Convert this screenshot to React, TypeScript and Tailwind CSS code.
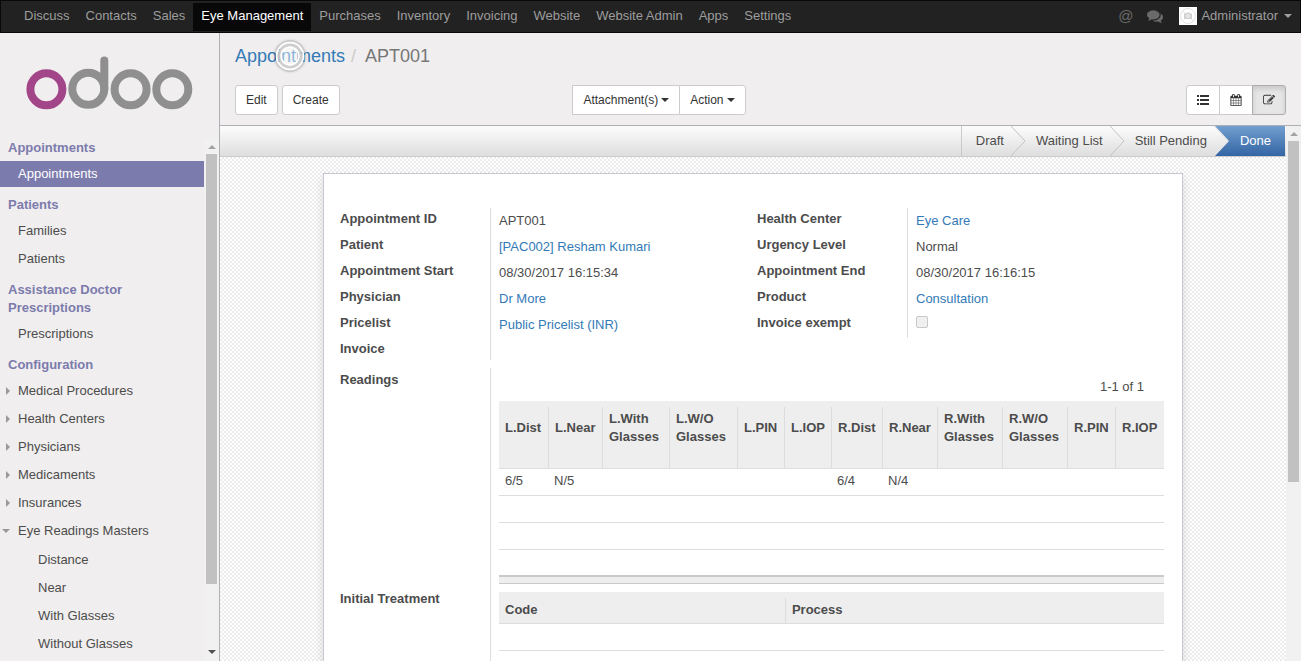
import React from "react";

const CALENDAR =
  "M192 1664h288v-288h-288v288zm352 0h320v-288h-320v288zm-352-352h288v-320h-288v320zm352 0h320v-320h-320v320zm-352-384h288v-288h-288v288zm736 736h320v-288h-320v288zm-384-736h320v-288h-320v288zm768 736h288v-288h-288v288zm-384-352h320v-320h-320v320zm-352-864v-288q0-13-9.5-22.5t-22.5-9.5h-64q-13 0-22.5 9.5t-9.5 22.5v288q0 13 9.5 22.5t22.5 9.5h64q13 0 22.5-9.5t9.5-22.5zm736 864h288v-320h-288v320zm-384-384h320v-288h-320v288zm384 0h288v-288h-288v288zm32-480v-288q0-13-9.5-22.5t-22.5-9.5h-64q-13 0-22.5 9.5t-9.5 22.5v288q0 13 9.5 22.5t22.5 9.5h64q13 0 22.5-9.5t9.5-22.5zm384-64v1280q0 52-38 90t-90 38h-1408q-52 0-90-38t-38-90v-1280q0-52 38-90t90-38h128v-96q0-66 47-113t113-47h64q66 0 113 47t47 113v96h384v-96q0-66 47-113t113-47h64q66 0 113 47t47 113v96h128q52 0 90 38t38 90z";
const PENCIL =
  "M888 1184l116-116-152-152-116 116v56h96v96h56zm440-720q-16-16-33 1l-350 350q-17 17-1 33t33-1l350-350q17-17 1-33zm80 594v190q0 119-84.5 203.5t-203.5 84.5h-832q-119 0-203.5-84.5t-84.5-203.5v-832q0-119 84.5-203.5t203.5-84.5h832q63 0 117 25 15 7 18 23 3 17-9 29l-49 49q-14 14-32 8-23-6-45-6h-832q-66 0-113 47t-47 113v832q0 66 47 113t113 47h832q66 0 113-47t47-113v-126q0-13 9-22l64-64q15-15 35-7t20 29zm-96-738l288 288-672 672h-288v-288zm444 132l-92 92-288-288 92-92q28-28 68-28t68 28l152 152q28 28 28 68t-28 68z";
const COMMENTS =
  "M1408 768q0 139-94 257t-256.5 186.5-353.5 68.5q-86 0-176-16-124 88-278 128-36 9-86 16h-3q-11 0-20.5-8t-11.5-21q-1-3-1-6.5t.5-6.5 2-6l2.5-5 3.5-5.5 4-5 4.5-5 4-4.5q5-6 23-25t26-29.5 22.5-29 25-38.5 20.5-44q-124-72-195-177t-71-224q0-139 94-257t256.5-186.5 353.5-68.5 353.5 68.5 256.5 186.5 94 257zm384 256q0 120-71 224.5t-195 176.5q10 24 20.5 44t25 38.5 22.5 29 26 29.5 23 25q1 1 4 4.5t4.5 5 4 5 3.5 5.5l2.5 5 2 6 .5 6.5-1 6.5q-3 14-13 22t-22 7q-50-7-86-16-154-40-278-128-90 16-176 16-271 0-472-132 58 4 88 4 161 0 309-45t264-129q125-92 192-212t67-254q0-77-23-152 129 71 204 178t75 230z";

function Glyph({ d, className }: { d: string; className: string }) {
  return (
    <svg viewBox="0 0 1792 1792" className={className} fill="currentColor" aria-hidden="true">
      <path d={d} />
    </svg>
  );
}

function CaretDown({ className = "" }: { className?: string }) {
  return (
    <svg viewBox="0 0 8 4" className={`h-1 w-2 shrink-0 ${className}`} fill="currentColor" aria-hidden="true">
      <path d="M0 0h8L4 4z" />
    </svg>
  );
}

function Navbar() {
  const apps = [
    "Discuss", "Contacts", "Sales", "Eye Management", "Purchases", "Inventory",
    "Invoicing", "Website", "Website Admin", "Apps", "Settings",
  ];
  return (
    <header className="flex h-[33px] shrink-0 items-center justify-between border border-[#080808] bg-[#222] pr-2 pl-[15px] text-[#9d9d9d]">
      <nav className="flex">
        {apps.map((app) => (
          <a
            key={app}
            href="#"
            className={
              app === "Eye Management"
                ? "bg-[#080808] px-2 pt-1 pb-[6px] leading-[18px] whitespace-nowrap text-white"
                : "px-2 pt-1 pb-[6px] leading-[18px] whitespace-nowrap"
            }
          >
            {app}
          </a>
        ))}
      </nav>
      <div className="flex items-center pb-[2px]">
        <button type="button" aria-label="Mentions" className="mr-[14px] text-[15px] leading-[18px] text-[#6a6a6a]">
          @
        </button>
        <button type="button" aria-label="Conversations" className="mr-4 text-[#6a6a6a]">
          <Glyph d={COMMENTS} className="size-4" />
        </button>
        <button type="button" className="flex items-center">
          <svg viewBox="0 0 18 18" className="mr-1 size-[18px]" aria-hidden="true">
            <rect width="18" height="18" fill="#fff" />
            <circle cx="9" cy="9" r="7.5" fill="none" stroke="#e2e2e2" />
            <path d="M3.5 4l11 10" stroke="#e2e2e2" />
            <path d="M5 6.5h2l1-1h2.5l1 1H13v5.5H5z" fill="#d0d0d0" />
            <circle cx="9" cy="9" r="1.8" fill="#fff" />
            <circle cx="9" cy="9" r="1" fill="#d0d0d0" />
          </svg>
          Administrator
          <CaretDown className="ml-[6px]" />
        </button>
      </div>
    </header>
  );
}

function Logo() {
  return (
    <svg viewBox="0 0 219 106" className="h-[106px] w-full shrink-0" fill="none" strokeWidth="8" role="img" aria-label="odoo">
      <circle cx="46.4" cy="56.3" r="16" stroke="#a24689" />
      <g stroke="#8f8f8f">
        <circle cx="88.3" cy="55.8" r="16" />
        <path d="M104.3 56V27.5" strokeLinecap="round" />
        <circle cx="130.6" cy="56.3" r="16" />
        <circle cx="172.3" cy="56.3" r="16" />
      </g>
    </svg>
  );
}

type Item = { label: string; active?: boolean; state?: "open" | "closed"; children?: string[] };

const SECTIONS: { title: string; items: Item[] }[] = [
  { title: "Appointments", items: [{ label: "Appointments", active: true }] },
  { title: "Patients", items: [{ label: "Families" }, { label: "Patients" }] },
  { title: "Assistance Doctor Prescriptions", items: [{ label: "Prescriptions" }] },
  {
    title: "Configuration",
    items: [
      { label: "Medical Procedures", state: "closed" },
      { label: "Health Centers", state: "closed" },
      { label: "Physicians", state: "closed" },
      { label: "Medicaments", state: "closed" },
      { label: "Insurances", state: "closed" },
      {
        label: "Eye Readings Masters",
        state: "open",
        children: ["Distance", "Near", "With Glasses", "Without Glasses"],
      },
    ],
  },
];

function ItemLink({ item }: { item: Item }) {
  return (
    <a
      href="#"
      className={
        item.active
          ? "mb-[2px] flex h-[26px] items-center bg-[#7c7bad] text-white"
          : "mb-[2px] flex h-[26px] items-center"
      }
    >
      <span className="flex w-[18px] shrink-0 items-center text-[#999]">
        {item.state === "closed" && (
          <svg viewBox="0 0 4 8" className="ml-[6px] h-2 w-1" fill="currentColor" aria-hidden="true">
            <path d="M0 0l4 4-4 4z" />
          </svg>
        )}
        {item.state === "open" && <CaretDown className="ml-[2px]" />}
      </span>
      {item.label}
    </a>
  );
}

function Sidebar() {
  return (
    <aside className="flex w-[220px] shrink-0 flex-col border-r border-[#afafb6] bg-[#f0eeee]">
      <Logo />
      <div className="flex min-h-0 flex-1">
        <nav className="min-w-0 flex-1 overflow-hidden text-[#4c4c4c]">
          {SECTIONS.map((section) => (
            <section key={section.title} className="mb-[9px]">
              <h2 className="mb-1 px-2 leading-[18px] font-bold text-[#7c7bad]">{section.title}</h2>
              {section.items.map((item) => (
                <React.Fragment key={item.label}>
                  <ItemLink item={item} />
                  {item.children && (
                    <div className="pt-px">
                      {item.children.map((child) => (
                        <a key={child} href="#" className="mb-[2px] flex h-[26px] items-center pl-[38px]">
                          {child}
                        </a>
                      ))}
                    </div>
                  )}
                </React.Fragment>
              ))}
            </section>
          ))}
        </nav>
        <Scrollbar thumb="h-[87.4%]" downArrow />
      </div>
    </aside>
  );
}

function Scrollbar({ thumb, downArrow = false }: { thumb: string; downArrow?: boolean }) {
  return (
    <div className="flex w-[15px] shrink-0 flex-col bg-[#f1f1f1]" aria-hidden="true">
      <div className="flex h-[15px] items-center justify-center text-[#a3a3a3]">
        <CaretDown className="rotate-180" />
      </div>
      <div className="min-h-0 flex-1 px-[2px]">
        <div className={`bg-[#c1c1c1] ${thumb}`} />
      </div>
      <div className="flex h-[15px] justify-center pt-1 text-[#505050]">{downArrow && <CaretDown />}</div>
    </div>
  );
}

function ControlPanel() {
  const btn = "flex h-[30px] items-center border border-[#ccc] bg-white px-[10px] text-[12px] text-[#333]";
  return (
    <div className="flex h-[93px] shrink-0 flex-col justify-between border-b border-[#afafb6] bg-[#f0eeee] px-[15px] pt-[10px] pb-[10px]">
      <div className="relative flex text-[18px] leading-[26px]">
        <a href="#" className="text-[#337ab7]">Appointments</a>
        <span className="px-[6px] text-[#ccc]">/</span>
        <span className="pl-[3px] text-[#777]">APT001</span>
        <svg viewBox="0 0 36 36" className="absolute -top-[5px] left-[37px] size-9" fill="none" aria-hidden="true">
          <circle cx="18" cy="18" r="16" stroke="#000" strokeOpacity="0.04" strokeWidth="3" />
          <circle cx="18" cy="18" r="15" stroke="#000" strokeOpacity="0.12" strokeWidth="2" />
          <circle cx="18" cy="18" r="11" fill="#fff" fillOpacity="0.45" stroke="#c8c8c8" strokeWidth="3" strokeOpacity="0.85" />
          <circle cx="18" cy="18" r="13.5" stroke="#fff" strokeWidth="1.5" />
          <circle cx="18" cy="18" r="9" stroke="#fff" strokeWidth="1.5" />
        </svg>
      </div>
      <div className="flex">
        <div className="flex w-1/2 justify-between pr-[15px]">
          <div className="flex gap-1">
            <button type="button" className={`${btn} rounded-[3px]`}>Edit</button>
            <button type="button" className={`${btn} rounded-[3px]`}>Create</button>
          </div>
          <div className="flex">
            <button type="button" className={`${btn} gap-[3px]`}>
              Attachment(s) <CaretDown />
            </button>
            <button type="button" className={`${btn} -ml-px gap-[3px] rounded-r-[3px]`}>
              Action <CaretDown />
            </button>
          </div>
        </div>
        <div className="flex w-1/2 justify-end">
          <button type="button" aria-label="List" className={`${btn} rounded-l-[3px]`}>
            <svg viewBox="0 0 12 12" className="size-3" fill="currentColor" aria-hidden="true">
              <path d="M0 1h2v2H0zM0 5h2v2H0zM0 9h2v2H0zM3 1h9v2H3zM3 5h9v2H3zM3 9h9v2H3z" />
            </svg>
          </button>
          <button type="button" aria-label="Calendar" className={`${btn} -ml-px`}>
            <Glyph d={CALENDAR} className="size-3" />
          </button>
          <button
            type="button"
            aria-label="Form"
            className="-ml-px flex h-[30px] items-center rounded-r-[3px] border border-[#adadad] bg-[#e6e6e6] px-[10px] text-[#333] shadow-[inset_0_3px_5px_rgba(0,0,0,0.125)]"
          >
            <Glyph d={PENCIL} className="size-3" />
          </button>
        </div>
      </div>
    </div>
  );
}

function Chevron({ last = false }: { last?: boolean }) {
  return (
    <svg viewBox="0 0 15 30" className="h-full w-[15px]" preserveAspectRatio="none" aria-hidden="true">
      {last && (
        <>
          <defs>
            <linearGradient id="stage" x1="0" y1="0" x2="0" y2="30" gradientUnits="userSpaceOnUse">
              <stop offset="0" stopColor="#729fcf" />
              <stop offset="1" stopColor="#3465a4" />
            </linearGradient>
          </defs>
          <path d="M1 0H15V30H1L15 15z" fill="url(#stage)" />
        </>
      )}
      <path d="M0 0L14 15L0 30" fill="none" stroke={last ? "#e4e4e4" : "#c4c4c4"} />
    </svg>
  );
}

function StatusBar() {
  return (
    <div className="flex h-[31px] shrink-0 justify-end border-b border-[#cacaca] bg-linear-to-b from-[#fcfcfc] to-[#dedede] pr-px text-[#4c4c4c]">
      <ol className="flex h-[30px] border-l border-[#cacaca] leading-[30px] whitespace-nowrap">
        <li className="flex gap-[7px] pl-[14px]">
          Draft <Chevron />
        </li>
        <li className="flex gap-[7px] pl-[10px]">
          Waiting List <Chevron />
        </li>
        <li className="flex gap-[7px] pl-[10px]">
          Still Pending <Chevron last />
        </li>
        <li className="bg-linear-to-b from-[#729fcf] to-[#3465a4] pr-[14px] pl-[11px] text-white">Done</li>
      </ol>
    </div>
  );
}

type Field = { label: string; value?: string; link?: boolean; checkbox?: boolean };

const LEFT: Field[] = [
  { label: "Appointment ID", value: "APT001" },
  { label: "Patient", value: "[PAC002] Resham Kumari", link: true },
  { label: "Appointment Start", value: "08/30/2017 16:15:34" },
  { label: "Physician", value: "Dr More", link: true },
  { label: "Pricelist", value: "Public Pricelist (INR)", link: true },
  { label: "Invoice" },
];
const RIGHT: Field[] = [
  { label: "Health Center", value: "Eye Care", link: true },
  { label: "Urgency Level", value: "Normal" },
  { label: "Appointment End", value: "08/30/2017 16:16:15" },
  { label: "Product", value: "Consultation", link: true },
  { label: "Invoice exempt", checkbox: true },
];

function Group({ fields }: { fields: Field[] }) {
  return (
    <dl>
      {fields.map((f) => (
        <div key={f.label} className="flex h-[26px] last:h-[22px] has-[input]:last:h-[26px]">
          <dt className="w-[150px] shrink-0 pt-[2px] leading-[18px] font-bold">
            {f.checkbox ? <label htmlFor="invoice-exempt">{f.label}</label> : f.label}
          </dt>
          <dd className="flex-1 border-l border-[#ddd] pt-1 pl-2 leading-[18px]">
            {f.link && <a href="#" className="text-[#337ab7]">{f.value}</a>}
            {!f.link && f.value}
            {f.checkbox && (
              <input
                id="invoice-exempt"
                type="checkbox"
                disabled
                className="block size-3 appearance-none rounded-[2px] border border-[#c8c8c8] bg-[#f0f0f0]"
              />
            )}
          </dd>
        </div>
      ))}
    </dl>
  );
}

const READINGS: { name: string; col: string; value?: string }[] = [
  { name: "L.Dist", col: "w-[49px]", value: "6/5" },
  { name: "L.Near", col: "w-[54px]", value: "N/5" },
  { name: "L.With Glasses", col: "w-[67px]" },
  { name: "L.W/O Glasses", col: "w-[68px]" },
  { name: "L.PIN", col: "w-[47px]" },
  { name: "L.IOP", col: "w-[47px]" },
  { name: "R.Dist", col: "w-[51px]", value: "6/4" },
  { name: "R.Near", col: "w-[55px]", value: "N/4" },
  { name: "R.With Glasses", col: "w-[65px]" },
  { name: "R.W/O Glasses", col: "w-[65px]" },
  { name: "R.PIN", col: "w-[48px]" },
  { name: "R.IOP", col: "w-[49px]" },
];

function Readings() {
  return (
    <table className="w-full table-fixed border-collapse text-left">
      <colgroup>
        {READINGS.map((r) => (
          <col key={r.name} className={r.col} />
        ))}
      </colgroup>
      <thead className="bg-[#eee]">
        <tr className="border-b border-[#ddd]">
          {READINGS.map((r, i) => (
            <th key={r.name} scope="col" className="p-0 pt-[6px]">
              <div
                className={
                  i === 0
                    ? "flex h-[61px] items-center pb-5 pl-[6px] leading-[18px]"
                    : "flex h-[61px] items-center border-l border-[#ddd] pb-5 pl-[6px] leading-[18px]"
                }
              >
                {r.name}
              </div>
            </th>
          ))}
        </tr>
      </thead>
      <tbody>
        <tr className="h-[27px] border-b border-[#ddd]">
          {READINGS.map((r) => (
            <td key={r.name} className="p-0 pb-[2px] pl-[6px] leading-[18px]">{r.value}</td>
          ))}
        </tr>
        {[0, 1, 2].map((n) => (
          <tr key={n} className={n < 2 ? "h-[27px] border-b border-[#ddd]" : "h-[25px]"}>
            <td colSpan={12} className="p-0" />
          </tr>
        ))}
      </tbody>
    </table>
  );
}

function Treatment() {
  return (
    <table className="w-full table-fixed border-collapse text-left">
      <thead className="bg-[#eee]">
        <tr className="border-b border-[#ddd]">
          <th scope="col" className="w-[43%] p-0 pt-[6px]">
            <div className="h-[25px] pt-[3px] pl-[6px] leading-[18px]">Code</div>
          </th>
          <th scope="col" className="p-0 pt-[6px]">
            <div className="h-[25px] border-l border-[#ddd] pt-[3px] pl-[6px] leading-[18px]">Process</div>
          </th>
        </tr>
      </thead>
      <tbody>
        {[0, 1, 2].map((n) => (
          <tr key={n} className="h-[27px] border-b border-[#ddd]">
            <td colSpan={2} className="p-0" />
          </tr>
        ))}
      </tbody>
    </table>
  );
}

function Sheet() {
  return (
    <div className="mx-auto mt-4 mb-4 w-full max-w-[860px] border border-[#c8c8d3] bg-white px-4 pt-[34px] pb-4 text-[#4c4c4c] shadow-[0_5px_10px_rgba(0,0,0,0.12)]">
      <div className="grid grid-cols-2 gap-x-2">
        <Group fields={LEFT} />
        <Group fields={RIGHT} />
      </div>
      <div className="mt-2">
        <div className="flex">
          <div className="w-[150px] shrink-0 pt-[3px] leading-[18px] font-bold">Readings</div>
          <div className="min-w-0 flex-1 border-l border-[#ddd] pr-[2px] pl-2">
            <div className="h-[33px] pt-[10px] pr-5 text-right leading-[18px]">1-1 of 1</div>
            <Readings />
            <div className="h-[9px] border-t-2 border-b border-[#cacaca] bg-[#eee]" />
          </div>
        </div>
        <div className="flex">
          <div className="w-[150px] shrink-0 pt-[6px] leading-[18px] font-bold">Initial Treatment</div>
          <div className="min-w-0 flex-1 border-l border-[#ddd] pt-2 pr-[2px] pl-2">
            <Treatment />
          </div>
        </div>
      </div>
    </div>
  );
}

export default function App() {
  return (
    <div className="flex h-screen flex-col overflow-hidden bg-[#f0eeee] font-['Liberation_Sans',Arial,sans-serif] text-[13px]">
      <Navbar />
      <div className="flex min-h-0 flex-1">
        <Sidebar />
        <main className="flex min-w-0 flex-1 flex-col">
          <ControlPanel />
          <div className="flex min-h-0 flex-1">
            <div className="flex min-w-0 flex-1 flex-col overflow-hidden">
              <StatusBar />
              <div className="min-h-0 flex-1 overflow-hidden bg-white bg-[repeating-conic-gradient(#ececec_0_25%,#fff_0_50%)] bg-size-[4px_4px]">
                <Sheet />
              </div>
            </div>
            <Scrollbar thumb="h-[67.6%]" />
          </div>
        </main>
      </div>
    </div>
  );
}
